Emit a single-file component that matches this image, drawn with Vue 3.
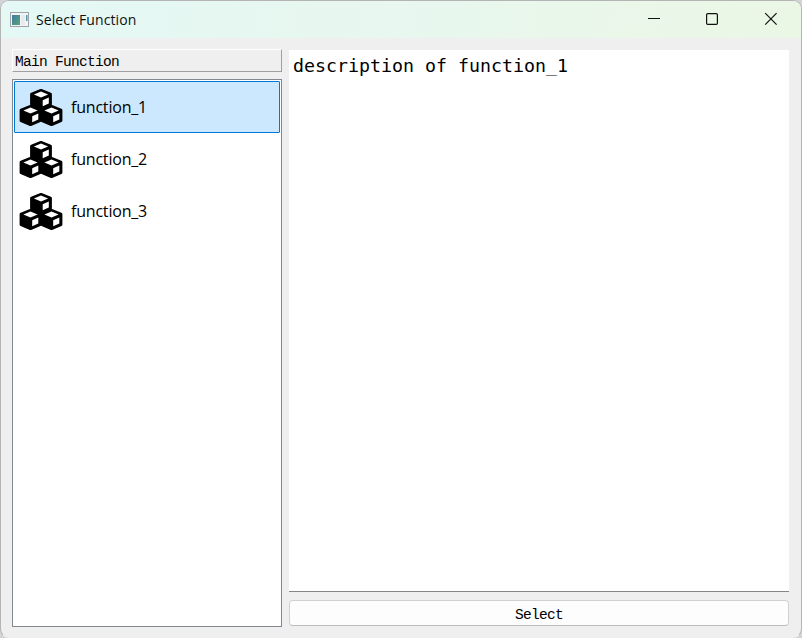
<script setup>
import { ref } from 'vue'

const items = ['function_1', 'function_2', 'function_3']
const selected = ref(0)
</script>

<template>
  <div class="window">
    <header class="titlebar">
      <svg class="app-icon" width="20" height="16" viewBox="0 0 20 16">
        <defs>
          <linearGradient id="screen" x1="0" y1="0" x2="1" y2="1">
            <stop offset="0" stop-color="#4478a4" />
            <stop offset="1" stop-color="#53a777" />
          </linearGradient>
        </defs>
        <rect x="0.5" y="0.5" width="18" height="14" fill="#f3f4f5" stroke="#9ca3a9" />
        <rect x="2" y="3" width="8" height="10" fill="url(#screen)" />
        <rect x="11" y="3" width="4" height="10" fill="#e9eaec" />
        <rect x="16" y="3" width="1.5" height="6" fill="#5b93a8" />
      </svg>
      <span class="title">Select Function</span>
      <svg class="controls" width="126" height="14" viewBox="0 0 126 14" fill="none" stroke="#111" stroke-width="1.2">
        <path d="M0 6.5H12" />
        <rect x="58.6" y="1.6" width="10.8" height="10.8" rx="1.2" />
        <path d="M117.2 1.2l11.4 11.4M128.6 1.2l-11.4 11.4" />
      </svg>
    </header>
    <main class="content">
      <section class="side">
        <div class="heading">Main Function</div>
        <ul class="list">
          <li
            v-for="(item, i) in items"
            :key="item"
            class="item"
            :class="{ selected: selected === i }"
            @click="selected = i"
          >
            <svg class="cubes" width="42" height="37" viewBox="0 0 42 37">
              <g v-for="p in [[10.5, -0.5], [0, 15.5], [21, 15.5]]" :key="p[0]" :transform="`translate(${p[0]} ${p[1]})`">
                <path d="M10.5 2L19.8 5.7V16L10.5 20L1.2 16V5.7Z" fill="#000" stroke="#000" stroke-width="3.2" stroke-linejoin="round" />
                <path d="M10.5 3L17.6 5.9L10.5 8.9L3.4 5.9Z" fill="#fff" />
                <path d="M12.2 11.7L18.3 9V15L12.2 17.7Z" fill="#fff" />
              </g>
            </svg>
            <span class="label">{{ item }}</span>
          </li>
        </ul>
      </section>
      <section class="detail">
        <div class="description">description of {{ items[selected] }}</div>
        <button class="select">Select</button>
      </section>
    </main>
  </div>
</template>

<style>
body {
  background: #d4d4d4;
}
</style>

<style scoped>
.window {
  box-sizing: border-box;
  width: 802px;
  height: 638px;
  display: flex;
  flex-direction: column;
  border: 1px solid #b4b4b4;
  border-bottom-color: #efefef;
  border-radius: 9px;
  overflow: hidden;
  background: #efefef;
}
.titlebar {
  height: 37px;
  flex: none;
  display: flex;
  align-items: center;
  padding-left: 9px;
  background: linear-gradient(100deg, #e4f8f5, #e8f7ef 50%, #ebf7e5);
}
.app-icon {
  flex: none;
}
.title {
  margin-left: 6px;
  font: 14px/20px "Open Sans", sans-serif;
  letter-spacing: 0.1px;
  color: #111;
}
.controls {
  margin-left: auto;
  margin-right: 27px;
  margin-bottom: 2px;
  overflow: visible;
}
.content {
  flex: 1;
  display: flex;
  gap: 7px;
  padding: 11px 12px 10px 11px;
}
.side {
  width: 270px;
  display: flex;
  flex-direction: column;
  gap: 7px;
}
.heading {
  box-sizing: border-box;
  height: 23px;
  padding-left: 2px;
  border: 1px solid #a0a0a0;
  border-top-color: #fff;
  border-left-color: #fff;
  font: 14.5px/25px "Liberation Mono", monospace;
  letter-spacing: -0.7px;
  color: #000;
}
.list {
  flex: 1;
  margin: 0;
  padding: 1px;
  border: 1px solid #828790;
  background: #fff;
  list-style: none;
}
.item {
  box-sizing: border-box;
  height: 52px;
  display: flex;
  align-items: center;
  gap: 9px;
  padding-left: 5px;
  border: 1px solid transparent;
  border-radius: 1px;
}
.item.selected {
  border-color: #0078d4;
  background: #cce8ff;
}
.cubes {
  overflow: visible;
}
.label {
  font: 16px/22px "Open Sans", sans-serif;
  letter-spacing: -0.2px;
  color: #000;
}
.detail {
  flex: 1;
  display: flex;
  flex-direction: column;
  gap: 8px;
  padding: 1px 0;
}
.description {
  flex: 1;
  padding: 4px;
  border-bottom: 1px solid #868686;
  background: #fff;
  font: 18.27px/24px "DejaVu Sans Mono", monospace;
  color: #000;
}
.select {
  height: 26px;
  padding: 3px 0 0;
  border: 1px solid #d0d0d0;
  border-bottom-color: #bcbcbc;
  border-radius: 4px;
  background: #fdfdfd;
  font: 14.5px/20px "Liberation Mono", monospace;
  letter-spacing: -0.7px;
  color: #000;
}
</style>
